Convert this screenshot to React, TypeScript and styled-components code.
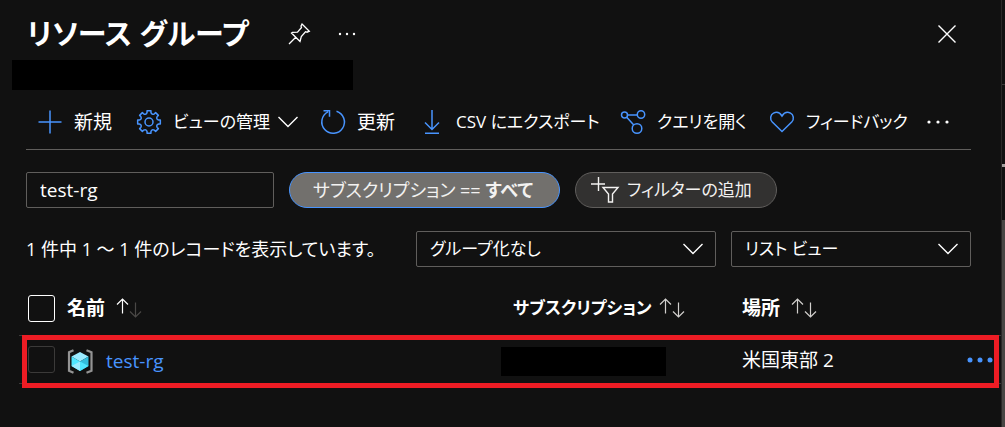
import React, { useState } from "react";
import styled, { createGlobalStyle } from "styled-components";

const blue = "#4894fe";
const line = "#605e5c";
const dim = "#3b3a39";

const GlobalStyle = createGlobalStyle`
  * { box-sizing: border-box; }
  body {
    margin: 0;
    background: #111111;
    color: #ffffff;
    font: 19px/28px "Open Sans", "Noto Sans CJK JP", sans-serif;
    font-feature-settings: "palt";
  }
  button, input, select {
    font: inherit;
    font-feature-settings: inherit;
    color: inherit;
    margin: 0;
    padding: 0;
    border: 0;
    background: none;
  }
  svg { display: block; flex: none; overflow: visible; }
`;

const Page = styled.div`
  display: flex;
  min-height: 100vh;
`;
const Blade = styled.main`
  flex: 1;
  min-width: 0;
`;
const Edge = styled.div`
  width: 4px;
  display: flex;
  flex-direction: column;
  border-left: 1px solid #292827;
`;
const EdgeTop = styled.div`
  height: 85px;
  border-bottom: 1px solid ${dim};
`;
const EdgeMiddle = styled.div`
  height: 135px;
  display: flex;
  align-items: center;
  padding-top: 25px;
`;
const EdgeDot = styled.span`
  width: 3px;
  height: 3px;
  background: #a19f9d;
`;
const EdgeThumb = styled.div`
  flex: 1;
  background: #484644;
`;

const Header = styled.header`
  display: flex;
  align-items: center;
  height: 60px;
  padding: 8px 30px 0 27px;
`;
const Title = styled.h1`
  margin: 0 12px 0 0;
  width: 236px;
  font-size: 29px;
  line-height: 44px;
  font-weight: 600;
  white-space: nowrap;
`;
const IconButton = styled.button`
  display: flex;
  align-items: center;
  justify-content: center;
  width: 48px;
  height: 48px;
`;
const CloseButton = styled(IconButton)`
  margin-left: auto;
`;
const Redaction = styled.div<{ $w: number; $h: number; $left: number }>`
  width: ${(p) => p.$w}px;
  height: ${(p) => p.$h}px;
  margin-left: ${(p) => p.$left}px;
  background: #000000;
`;

const Toolbar = styled.nav`
  display: flex;
  align-items: center;
  height: 60px;
  margin: 0 30px 0 26px;
  padding: 4px 0 0 12px;
  border-bottom: 1px solid ${line};
`;
const Command = styled.button<{ $w?: number; $kana?: boolean }>`
  display: flex;
  align-items: center;
  gap: 12px;
  width: ${(p) => (p.$w ? `${p.$w}px` : "auto")};
  font-size: ${(p) => (p.$kana ? 17 : 19)}px;
  white-space: nowrap;
  text-align: left;
`;
const MenuLabel = styled.span`
  display: flex;
  align-items: center;
  gap: 8px;
`;

const Filters = styled.div`
  display: flex;
  gap: 15px;
  margin: 22px 30px 0 26px;
`;
const Search = styled.input`
  width: 248px;
  height: 36px;
  padding: 0 13px;
  border: 1px solid ${line};
  border-radius: 2px;
`;
const Pill = styled.button<{ $active?: boolean; $w: number }>`
  display: flex;
  align-items: center;
  gap: 8px;
  width: ${(p) => p.$w}px;
  height: 36px;
  padding-left: ${(p) => (p.$active ? 23 : 15)}px;
  font-size: ${(p) => (p.$active ? 18 : 17)}px;
  white-space: pre;
  border-radius: 18px;
  border: 1px solid ${(p) => (p.$active ? blue : line)};
  background: ${(p) => (p.$active ? "#72706d" : "#323130")};
  color: #f3f2f1;
`;

const Summary = styled.div`
  display: flex;
  align-items: center;
  gap: 15px;
  margin: 23px 30px 0 26px;
`;
const Count = styled.p`
  flex: 1;
  margin: 0;
  font-size: 18px;
  white-space: nowrap;
`;
const Picker = styled.label<{ $w: number }>`
  display: grid;
  grid-template-columns: 1fr 20px;
  align-items: center;
  width: ${(p) => p.$w}px;
  height: 36px;
  padding-right: 12px;
  border: 1px solid ${line};
  border-radius: 2px;

  select {
    grid-area: 1 / 1 / 2 / 3;
    height: 34px;
    padding-left: 13px;
    font-size: 17px;
    appearance: none;
    outline: 0;
  }
  svg {
    grid-area: 1 / 2 / 2 / 3;
    pointer-events: none;
  }
`;

const Table = styled.table`
  width: calc(100% - 19px);
  margin: 14px 0 0 19px;
  table-layout: fixed;
  border-spacing: 0;

  th, td {
    padding: 0;
    text-align: left;
    white-space: nowrap;
  }
  th {
    height: 54px;
    font-weight: 600;
  }
`;
const Col = styled.col<{ $w?: number }>`
  width: ${(p) => (p.$w ? `${p.$w}px` : "auto")};
`;
const Row = styled.tr`
  position: relative;

  td {
    height: 49px;
    border: solid ${dim};
    border-width: 1px 0;
  }
`;
const Highlight = styled.span`
  position: absolute;
  inset: 0 2px -4px 3px;
  border: 5px solid #ed1c24;
  pointer-events: none;
`;
const Check = styled.input<{ $dim?: boolean }>`
  display: block;
  appearance: none;
  width: 27px;
  height: 27px;
  margin-left: 9px;
  border: 1px solid ${(p) => (p.$dim ? dim : "#ffffff")};
  border-radius: 3px;
`;
const HeadCell = styled.div<{ $kana?: boolean }>`
  display: flex;
  align-items: center;
  gap: ${(p) => (p.$kana ? 8 : 12)}px;
  font-size: ${(p) => (p.$kana ? 17 : 19)}px;
`;
const NameCell = styled.div`
  display: flex;
  align-items: center;
  gap: 13px;
  padding-top: 3px;
`;
const RedactedCell = styled.div`
  padding-top: 3px;
`;
const Link = styled.a`
  color: ${blue};
  text-decoration: none;
`;
const MoreButton = styled.button`
  display: flex;
  margin-left: 6px;
`;

const Icon = ({ children, size = 24, color = blue, sw = 1.5 }: {
  children: React.ReactNode; size?: number; color?: string; sw?: number;
}) => (
  <svg width={size} height={size} viewBox={`0 0 ${size} ${size}`} fill="none" stroke={color} strokeWidth={sw} aria-hidden="true">
    {children}
  </svg>
);

const Dots = ({ r, step, color = "#ffffff" }: { r: number; step: number; color?: string }) => (
  <svg width="26" height="24" viewBox="0 0 26 24" fill={color} aria-hidden="true">
    <circle cx={13 - step} cy="12" r={r} />
    <circle cx="13" cy="12" r={r} />
    <circle cx={13 + step} cy="12" r={r} />
  </svg>
);

const Chevron = () => (
  <svg width="20" height="12" viewBox="0 0 20 12" fill="none" stroke="#ffffff" strokeWidth="1.4" aria-hidden="true">
    <path d="M.5 1 10 10.5 19.5 1" />
  </svg>
);

// Eight teeth with a rounded valley between each pair.
const gearPath = (() => {
  const at = (a: number, r: number) =>
    `${(12 + r * Math.sin(a)).toFixed(2)} ${(12 - r * Math.cos(a)).toFixed(2)}`;
  let d = "";
  for (let i = 0; i < 8; i++) {
    const base = (i * Math.PI) / 4;
    d += `${i ? "L" : "M"}${at(base - 0.17, 11.5)}L${at(base + 0.17, 11.5)}L${at(base + 0.2, 9.8)}`;
    d += `Q${at(base + Math.PI / 8, 7.4)} ${at(base + Math.PI / 4 - 0.2, 9.8)}`;
  }
  return `${d}Z`;
})();

const Sort = ({ ascending }: { ascending?: boolean }) => (
  <svg width="24" height="20" viewBox="0 0 24 20" fill="none" strokeWidth="1.2" aria-hidden="true">
    <path stroke={ascending ? "#ffffff" : "#d2d0ce"} d="M5.5 15.500V1M0 6.500 5.500 1 11 6.500" />
    <path stroke={ascending ? "#4a4846" : "#d2d0ce"} d="M18.500 4.500V19M13 13.500 18.500 19 24 13.500" />
  </svg>
);

const ResourceGroupIcon = () => (
  <svg width="26" height="25" viewBox="0 0 26 25" aria-hidden="true">
    <path d="M6.500 1.200 2 3.200V21.800L6.500 23.800M19.500 1.200 24.500 3.200V21.800L19.500 23.800" fill="none" stroke="#949494" strokeWidth="2.200" />
    <path d="M13 3 21.500 7.500 13 12.500 4.500 7.500Z" fill="#9cebff" />
    <path d="M4.500 7.500 13 12.500V22L4.500 17Z" fill="#50e6ff" />
    <path d="M21.500 7.500 13 12.500V22L21.500 17Z" fill="#32bedd" />
    <path d="M13 12.500V22L4.500 17Z" fill="#9cebff" />
    <path d="M13 12.500V22L21.500 17Z" fill="#50e6ff" />
  </svg>
);

export default function App() {
  const [query, setQuery] = useState("test-rg");
  return (
    <>
      <GlobalStyle />
      <Page>
        <Blade>
          <Header>
            <Title>リソース グループ</Title>
            <IconButton aria-label="ピン留め">
              <Icon size={22} color="#ffffff" sw={1.3}>
                <path d="M1 21 8 14M14 1 21.300 8.200 19 9.200 17.500 8.700 13.300 13.500 12 18.500 3.500 10 4.500 9.300 9.500 9.200 13.500 4.500 13 3Z" />
              </Icon>
            </IconButton>
            <IconButton aria-label="その他"><Dots r={1.2} step={7} /></IconButton>
            <CloseButton aria-label="閉じる">
              <Icon size={18} color="#ffffff" sw={1.4}><path d="M.5.5 17.500 17.500M17.500.5.5 17.500" /></Icon>
            </CloseButton>
          </Header>
          <Redaction $w={341} $h={30} $left={12} />

          <Toolbar>
            <Command $w={99}>
              <Icon><path d="M12 .5V23.500M.5 12H23.500" /></Icon>新規
            </Command>
            <Command $w={184} $kana>
              <Icon><path d={gearPath} strokeLinejoin="round" /><circle cx="12" cy="12" r="4" /></Icon>
              <MenuLabel>ビューの管理<Chevron /></MenuLabel>
            </Command>
            <Command $w={99}>
              <Icon><path d="M15.500 1.200A11.300 11.300 0 1 1 7 1.900M2.500.8H8.500V6.800" /></Icon>更新
            </Command>
            <Command $w={201} $kana>
              <Icon><path d="M12 0V19M5 12.500 12 19.500 19 12.500M5 23.200H19" /></Icon>CSV にエクスポート
            </Command>
            <Command $w={149} $kana>
              <Icon>
                <circle cx="3.500" cy="5" r="3" /><circle cx="20" cy="4.500" r="3.700" /><circle cx="16" cy="18.500" r="4.800" />
                <path d="M6.500 5H16.300M5.700 7.200 12.800 15" />
              </Icon>クエリを開く
            </Command>
            <Command $w={155} $kana>
              <Icon><path d="M12 21.500 2.300 12C-.5 9 .5 4.800 3.500 3.200 6.700 1.500 10 2.800 12 6 14 2.800 17.300 1.500 20.500 3.200 23.500 4.800 24.500 9 21.700 12Z" /></Icon>フィードバック
            </Command>
            <Command aria-label="その他のコマンド"><Dots r={1.6} step={9} /></Command>
          </Toolbar>

          <Filters>
            <Search aria-label="フィルター" value={query} onChange={(e) => setQuery(e.target.value)} />
            <Pill $active $w={271}><span>サブスクリプション == <strong>すべて</strong></span></Pill>
            <Pill $w={202}>
              <svg width="28" height="26" viewBox="0 0 28 26" fill="none" stroke="#f3f2f1" strokeWidth="1.400" aria-hidden="true">
                <path d="M7.500 0V14M0 7H14M12 10.500H27L21.500 17V25H17.500V17Z" />
              </svg>
              フィルターの追加
            </Pill>
          </Filters>

          <Summary>
            <Count>1 件中 1 ～ 1 件のレコードを表示しています。</Count>
            <Picker $w={300}>
              <select aria-label="グループ化"><option>グループ化なし</option></select>
              <Chevron />
            </Picker>
            <Picker $w={240}>
              <select aria-label="ビュー"><option>リスト ビュー</option></select>
              <Chevron />
            </Picker>
          </Summary>

          <Table>
            <colgroup>
              <Col $w={48} /><Col /><Col $w={229} /><Col $w={219} /><Col $w={40} />
            </colgroup>
            <thead>
              <tr>
                <th><Check type="checkbox" aria-label="すべて選択" /></th>
                <th><HeadCell>名前<Sort ascending /></HeadCell></th>
                <th><HeadCell $kana>サブスクリプション<Sort /></HeadCell></th>
                <th><HeadCell>場所<Sort /></HeadCell></th>
                <th />
              </tr>
            </thead>
            <tbody>
              <Row>
                <td><Check $dim type="checkbox" aria-label="test-rg を選択" /></td>
                <td><NameCell><ResourceGroupIcon /><Link href="#test-rg">test-rg</Link></NameCell></td>
                <td><RedactedCell><Redaction $w={165} $h={29} $left={-12} /></RedactedCell></td>
                <td>米国東部 2</td>
                <td>
                  <MoreButton aria-label="操作"><Dots r={2.5} step={10} color={blue} /></MoreButton>
                  <Highlight />
                </td>
              </Row>
            </tbody>
          </Table>
        </Blade>
        <Edge aria-hidden="true">
          <EdgeTop />
          <EdgeMiddle><EdgeDot /></EdgeMiddle>
          <EdgeThumb />
        </Edge>
      </Page>
    </>
  );
}
